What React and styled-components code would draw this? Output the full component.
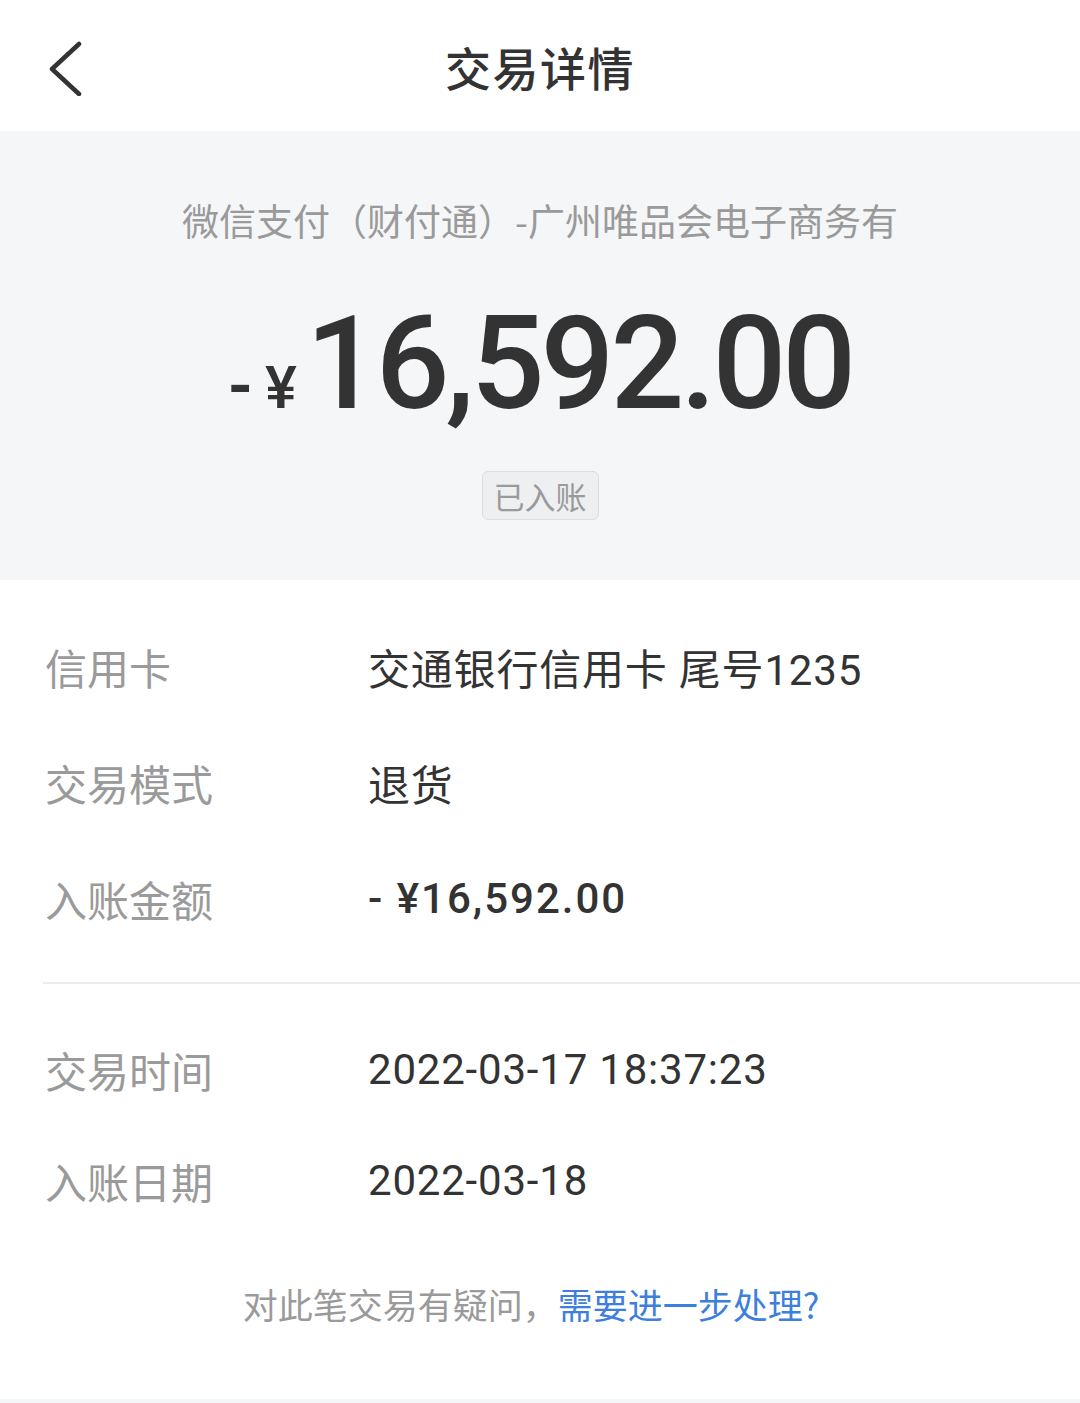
import styled, { createGlobalStyle } from "styled-components";

const GlobalStyle = createGlobalStyle`
  html, body {
    margin: 0;
    padding: 0;
    background: #f5f6f8;
  }
  body {
    font-family: Roboto, "Noto Sans CJK SC", sans-serif;
    -webkit-font-smoothing: antialiased;
  }
`;

const Page = styled.div`
  width: 1080px;
  display: flex;
  flex-direction: column;
`;

const Header = styled.header`
  height: 131px;
  background: #ffffff;
  display: grid;
  grid-template-columns: 120px 1fr 120px;
  align-items: center;

  .back {
    padding-left: 46px;
    display: flex;
    align-items: center;
    height: 100%;
  }
  h1 {
    margin: 0;
    text-align: center;
    font-family: "Noto Sans CJK SC", sans-serif;
    font-size: 46px;
    font-weight: 500;
    color: #333333;
    letter-spacing: 1.5px;
  }
`;

const Summary = styled.section`
  background: #f5f6f8;
  height: 449px;
  box-sizing: border-box;
  padding-top: 64px;
  display: flex;
  flex-direction: column;
  align-items: center;
`;

const Merchant = styled.div`
  font-family: "Noto Sans CJK SC", sans-serif;
  font-size: 37px;
  line-height: 50px;
  color: #9a9a9a;
  white-space: nowrap;
`;

const Amount = styled.div`
  margin-top: 54px;
  display: flex;
  align-items: baseline;
  color: #333333;
  line-height: 130px;
  height: 130px;

  .minus {
    font-size: 64px;
    font-weight: 700;
    margin-right: 12px;
  }
  .yen {
    font-size: 60px;
    font-weight: 500;
    margin-right: 9px;
  }
  .value {
    font-size: 130px;
    font-weight: 500;
    letter-spacing: -4px;
  }
`;

const Badge = styled.span`
  margin-top: 42px;
  height: 49px;
  box-sizing: border-box;
  padding: 0 11px;
  border: 1px solid #dcdddf;
  border-radius: 6px;
  background: #eeeff1;
  color: #9a9a9a;
  font-family: "Noto Sans CJK SC", sans-serif;
  font-size: 31px;
  line-height: 47px;
`;

const Details = styled.section`
  background: #ffffff;
  display: flex;
  flex-direction: column;
`;

const Group = styled.div`
  padding-top: ${(p) => p.$top}px;
`;

const Row = styled.div`
  height: ${(p) => p.$h}px;
  display: grid;
  grid-template-columns: 323px 1fr;
  align-items: center;
  padding-left: 45px;
`;

const Label = styled.span`
  font-family: "Noto Sans CJK SC", sans-serif;
  font-size: 42px;
  color: #9a9a9a;
`;

const Value = styled.span`
  font-size: 42px;
  color: #333333;
  font-weight: ${(p) => (p.$strong ? 500 : 400)};
  letter-spacing: ${(p) => (p.$strong ? 2 : 0.8)}px;
  white-space: nowrap;
`;

const Divider = styled.hr`
  margin: 26px 0 0 43px;
  border: none;
  border-top: 2px solid #ececec;
`;

const Footer = styled.p`
  margin: 44px 0 0;
  padding: 0 18px 71px 0;
  text-align: center;
  font-family: "Noto Sans CJK SC", sans-serif;
  font-size: 35px;
  line-height: 48px;
  color: #9a9a9a;

  a {
    color: #3d7fdc;
    text-decoration: none;
  }
`;

function BackIcon() {
  return (
    <svg width="40" height="60" viewBox="0 0 40 60">
      <polyline
        points="33,8 6,33 33,58"
        fill="none"
        stroke="#333"
        strokeWidth="4.5"
        strokeLinecap="round"
        strokeLinejoin="round"
      />
    </svg>
  );
}

const firstRows = [
  { label: "信用卡", value: "交通银行信用卡 尾号1235" },
  { label: "交易模式", value: "退货" },
  { label: "入账金额", value: "- ¥16,592.00", strong: true },
];

const secondRows = [
  { label: "交易时间", value: "2022-03-17 18:37:23" },
  { label: "入账日期", value: "2022-03-18" },
];

export default function App() {
  return (
    <Page>
      <GlobalStyle />
      <Header>
        <div className="back">
          <BackIcon />
        </div>
        <h1>交易详情</h1>
        <div />
      </Header>

      <Summary>
        <Merchant>微信支付（财付通）-广州唯品会电子商务有</Merchant>
        <Amount>
          <span className="minus">-</span>
          <span className="yen">¥</span>
          <span className="value">16,592.00</span>
        </Amount>
        <Badge>已入账</Badge>
      </Summary>

      <Details>
        <Group $top={28}>
          {firstRows.map((r) => (
            <Row key={r.label} $h={116}>
              <Label>{r.label}</Label>
              <Value $strong={r.strong}>{r.value}</Value>
            </Row>
          ))}
        </Group>
        <Divider />
        <Group $top={30}>
          {secondRows.map((r) => (
            <Row key={r.label} $h={111}>
              <Label>{r.label}</Label>
              <Value>{r.value}</Value>
            </Row>
          ))}
        </Group>
        <Footer>
          对此笔交易有疑问，<a href="#">需要进一步处理?</a>
        </Footer>
      </Details>
    </Page>
  );
}
